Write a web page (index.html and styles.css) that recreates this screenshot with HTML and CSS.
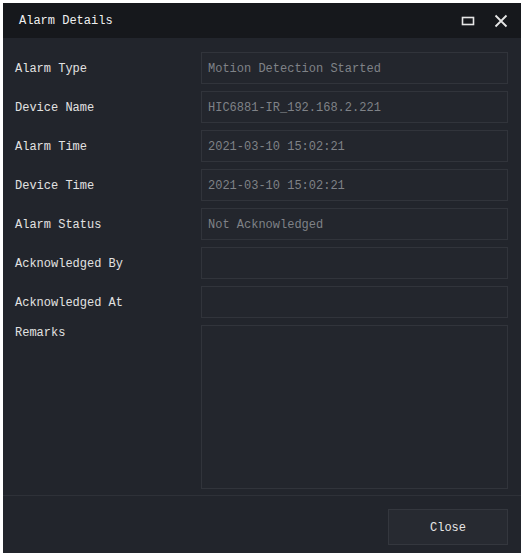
FILE: index.html
```html
<!DOCTYPE html>
<html>
<head>
<meta charset="utf-8">
<link rel="stylesheet" href="styles.css">
</head>
<body>
<div class="dialog">
  <div class="header">
    <span class="title">Alarm Details</span>
    <div class="actions">
      <svg class="icon" width="14" height="14" viewBox="0 0 14 14"><rect x="1.5" y="3.5" width="11" height="7" fill="none" stroke="#e6e6e6" stroke-width="1.6"/></svg>
      <svg class="icon" width="14" height="14" viewBox="0 0 14 14"><path d="M1.5 1.5 L12.5 12.5 M12.5 1.5 L1.5 12.5" stroke="#e6e6e6" stroke-width="1.8"/></svg>
    </div>
  </div>
  <div class="body">
    <div class="label">Alarm Type</div><div class="field">Motion Detection Started</div>
    <div class="label">Device Name</div><div class="field">HIC6881-IR_192.168.2.221</div>
    <div class="label">Alarm Time</div><div class="field">2021-03-10 15:02:21</div>
    <div class="label">Device Time</div><div class="field">2021-03-10 15:02:21</div>
    <div class="label">Alarm Status</div><div class="field">Not Acknowledged</div>
    <div class="label">Acknowledged By</div><div class="field"></div>
    <div class="label">Acknowledged At</div><div class="field"></div>
    <div class="label label-top">Remarks</div><div class="field area"></div>
  </div>
  <div class="footer">
    <button class="btn">Close</button>
  </div>
</div>
</body>
</html>
```
FILE: styles.css
```css
html, body {
  margin: 0;
  padding: 0;
  background: #ffffff;
}
body {
  padding: 3px;
  font-family: "Liberation Mono", "DejaVu Sans Mono", monospace;
  font-size: 12px;
}
.dialog {
  width: 518px;
  height: 550px;
  background: #22252c;
  display: flex;
  flex-direction: column;
}
.header {
  height: 35px;
  box-sizing: border-box;
  background: #16181c;
  display: flex;
  align-items: center;
  justify-content: space-between;
  padding: 1px 13px 0 16px;
  flex: none;
}
.title {
  color: #f0f0f0;
}
.actions {
  display: flex;
  gap: 19px;
  align-items: center;
}
.icon {
  display: block;
}
.body {
  flex: 1;
  display: grid;
  grid-template-columns: 186px 307px;
  grid-template-rows: repeat(7, 32px) 164px;
  row-gap: 7px;
  padding: 14px 0 0 12px;
  align-content: start;
}
.label {
  color: #e2e2e2;
  display: flex;
  align-items: center;
  padding-top: 1px;
}
.label-top {
  align-items: flex-start;
  padding-top: 1px;
}
.field {
  box-sizing: border-box;
  border: 1px solid #31343b;
  background: #23262d;
  color: #7f8287;
  display: flex;
  align-items: center;
  padding: 1px 0 0 6px;
}
.area {
  align-items: flex-start;
}
.footer {
  flex: none;
  height: 58px;
  border-top: 1px solid #2e3138;
  box-sizing: border-box;
  display: flex;
  justify-content: flex-end;
  align-items: flex-start;
  padding: 13px 13px 0 0;
}
.btn {
  width: 120px;
  height: 36px;
  background: #272a31;
  border: 1px solid #34373e;
  color: #e6e6e6;
  font-family: "Liberation Mono", "DejaVu Sans Mono", monospace;
  font-size: 12px;
  padding: 2px 0 0 0;
}
```
